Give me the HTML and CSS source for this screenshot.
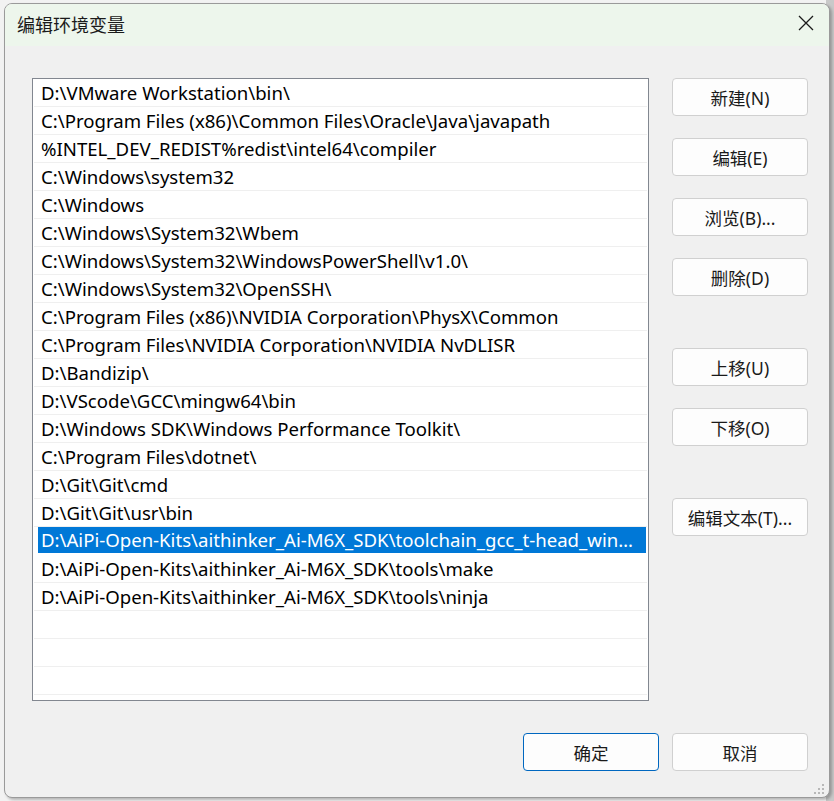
FILE: index.html
```html
<!DOCTYPE html>
<html lang="zh-CN">
<head>
<meta charset="utf-8">
<title>编辑环境变量</title>
<link rel="stylesheet" href="styles.css">
</head>
<body>
<div class="backdrop">
  <div class="dialog">
    <div class="titlebar">
      <span class="title">编辑环境变量</span>
      <span class="close">
        <svg width="16" height="16" viewBox="0 0 16 16"><path d="M1 1 L15 15 M15 1 L1 15" stroke="#1a1a1a" stroke-width="1.3" fill="none"/></svg>
      </span>
    </div>
    <div class="content">
      <div class="main">
        <div class="listbox">
          <div class="row">D:\VMware Workstation\bin\</div>
          <div class="row">C:\Program Files (x86)\Common Files\Oracle\Java\javapath</div>
          <div class="row">%INTEL_DEV_REDIST%redist\intel64\compiler</div>
          <div class="row">C:\Windows\system32</div>
          <div class="row">C:\Windows</div>
          <div class="row">C:\Windows\System32\Wbem</div>
          <div class="row">C:\Windows\System32\WindowsPowerShell\v1.0\</div>
          <div class="row">C:\Windows\System32\OpenSSH\</div>
          <div class="row">C:\Program Files (x86)\NVIDIA Corporation\PhysX\Common</div>
          <div class="row">C:\Program Files\NVIDIA Corporation\NVIDIA NvDLISR</div>
          <div class="row">D:\Bandizip\</div>
          <div class="row">D:\VScode\GCC\mingw64\bin</div>
          <div class="row">D:\Windows SDK\Windows Performance Toolkit\</div>
          <div class="row">C:\Program Files\dotnet\</div>
          <div class="row">D:\Git\Git\cmd</div>
          <div class="row">D:\Git\Git\usr\bin</div>
          <div class="row selected"><span class="sel">D:\AiPi-Open-Kits\aithinker_Ai-M6X_SDK\toolchain_gcc_t-head_windows\bin</span></div>
          <div class="row">D:\AiPi-Open-Kits\aithinker_Ai-M6X_SDK\tools\make</div>
          <div class="row">D:\AiPi-Open-Kits\aithinker_Ai-M6X_SDK\tools\ninja</div>
          <div class="row"></div>
          <div class="row"></div>
          <div class="row"></div>
        </div>
        <div class="side">
          <div class="group">
            <button class="btn">新建(N)</button>
            <button class="btn">编辑(E)</button>
            <button class="btn">浏览(B)...</button>
            <button class="btn">删除(D)</button>
          </div>
          <div class="group">
            <button class="btn">上移(U)</button>
            <button class="btn">下移(O)</button>
          </div>
          <div class="group">
            <button class="btn">编辑文本(T)...</button>
          </div>
        </div>
      </div>
      <div class="footer">
        <button class="btn primary">确定</button>
        <button class="btn">取消</button>
      </div>
    </div>
    <svg class="grip" width="12" height="12" viewBox="0 0 12 12">
      <rect x="9" y="1" width="2" height="2" fill="#b8b8b8"/>
      <rect x="5" y="5" width="2" height="2" fill="#b8b8b8"/>
      <rect x="9" y="5" width="2" height="2" fill="#b8b8b8"/>
      <rect x="1" y="9" width="2" height="2" fill="#b8b8b8"/>
      <rect x="5" y="9" width="2" height="2" fill="#b8b8b8"/>
      <rect x="9" y="9" width="2" height="2" fill="#b8b8b8"/>
    </svg>
  </div>
</div>
</body>
</html>
```
FILE: styles.css
```css
* { box-sizing: border-box; }
html, body { margin: 0; padding: 0; }
body {
  width: 834px;
  height: 801px;
  overflow: hidden;
  background: linear-gradient(to right, #f2f2f2 0, #f2f2f2 826px, #c9c9c9 826px);
  font-family: "Noto Sans", "Noto Sans CJK SC", sans-serif;
  color: #000;
}
.backdrop {
  padding: 3px 0 0 4px;
}
.dialog {
  position: relative;
  width: 826px;
  height: 795px;
  background: #f0f0f0;
  border: 1px solid #9a9a9a;
  border-radius: 8px;
  box-shadow: 2px 2px 3px rgba(0,0,0,0.25);
  overflow: hidden;
}
.titlebar {
  height: 42px;
  background: #edf6ec;
  display: flex;
  align-items: center;
  justify-content: space-between;
  padding: 0 15px 0 12px;
}
.title {
  font-family: "Noto Sans CJK SC", sans-serif;
  font-size: 18px;
  color: #1a1a1a;
  margin-top: -3px;
}
.close {
  display: flex;
  margin-top: -4px;
}
.content {
  padding: 32px 21px 0 27px;
}
.main {
  display: flex;
  gap: 23px;
}
.listbox {
  width: 617px;
  height: 623px;
  background: #fff;
  border: 1px solid #828790;
  padding: 0 1px;
}
.row {
  height: 28px;
  border-bottom: 1px solid #efefef;
  padding: 0 0 0 7px;
  font-size: 18.6px;
  line-height: 27px;
  white-space: nowrap;
  overflow: hidden;
  text-overflow: ellipsis;
}
.row.selected {
  padding: 0 1px 0 4px;
  border-bottom-color: #fff;
}
.sel {
  display: block;
  background: #0078d7;
  color: #fff;
  height: 26px;
  line-height: 25px;
  padding-left: 3px;
  padding-right: 8px;
  overflow: hidden;
  text-overflow: ellipsis;
  white-space: nowrap;
}
.side {
  display: flex;
  flex-direction: column;
  gap: 52px;
}
.group {
  display: flex;
  flex-direction: column;
  gap: 22px;
}
.btn {
  width: 136px;
  height: 38px;
  background: #fdfdfd;
  border: 1px solid #d0d0d0;
  border-radius: 4px;
  font-family: "Noto Sans", "Noto Sans CJK SC", sans-serif;
  font-size: 17.5px;
  color: #1a1a1a;
  padding: 0;
}
.btn.primary {
  border-color: #0067c0;
}
.footer {
  display: flex;
  justify-content: flex-end;
  gap: 13px;
  margin-top: 32px;
}
.grip {
  position: absolute;
  right: 4px;
  bottom: 2px;
}
```
